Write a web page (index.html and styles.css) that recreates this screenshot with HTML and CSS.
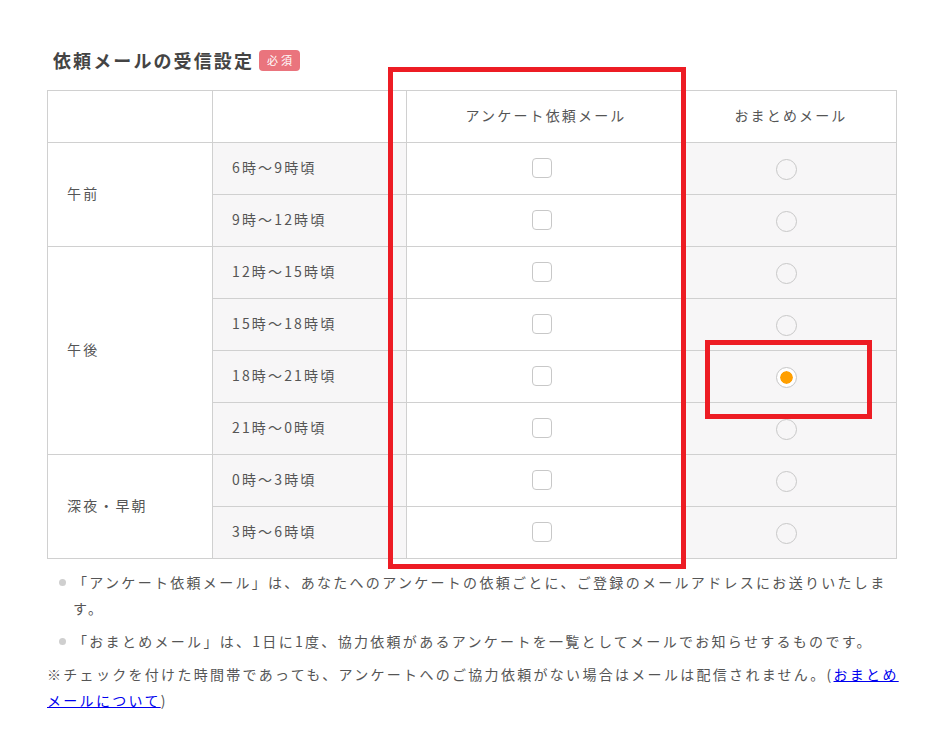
FILE: index.html
```html
<!DOCTYPE html>
<html lang="ja">
<head>
<meta charset="utf-8">
<title>依頼メールの受信設定</title>
<link rel="stylesheet" href="styles.css">
</head>
<body>
<div class="page">
  <h2 class="title">依頼メールの受信設定<span class="badge">必須</span></h2>

  <table class="settings">
    <colgroup>
      <col class="c-period">
      <col class="c-time">
      <col class="c-survey">
      <col class="c-summary">
    </colgroup>
    <thead>
      <tr>
        <th></th>
        <th></th>
        <th>アンケート依頼メール</th>
        <th>おまとめメール</th>
      </tr>
    </thead>
    <tbody>
      <tr>
        <td class="period" rowspan="2">午前</td>
        <td class="time">6時〜9時頃</td>
        <td class="opt"><input type="checkbox" class="check"></td>
        <td class="opt alt"><input type="radio" name="summary" class="radio"></td>
      </tr>
      <tr>
        <td class="time">9時〜12時頃</td>
        <td class="opt"><input type="checkbox" class="check"></td>
        <td class="opt alt"><input type="radio" name="summary" class="radio"></td>
      </tr>
      <tr>
        <td class="period" rowspan="4">午後</td>
        <td class="time">12時〜15時頃</td>
        <td class="opt"><input type="checkbox" class="check"></td>
        <td class="opt alt"><input type="radio" name="summary" class="radio"></td>
      </tr>
      <tr>
        <td class="time">15時〜18時頃</td>
        <td class="opt"><input type="checkbox" class="check"></td>
        <td class="opt alt"><input type="radio" name="summary" class="radio"></td>
      </tr>
      <tr>
        <td class="time">18時〜21時頃</td>
        <td class="opt"><input type="checkbox" class="check"></td>
        <td class="opt alt"><input type="radio" name="summary" class="radio" checked></td>
      </tr>
      <tr>
        <td class="time">21時〜0時頃</td>
        <td class="opt"><input type="checkbox" class="check"></td>
        <td class="opt alt"><input type="radio" name="summary" class="radio"></td>
      </tr>
      <tr>
        <td class="period" rowspan="2">深夜・早朝</td>
        <td class="time">0時〜3時頃</td>
        <td class="opt"><input type="checkbox" class="check"></td>
        <td class="opt alt"><input type="radio" name="summary" class="radio"></td>
      </tr>
      <tr>
        <td class="time">3時〜6時頃</td>
        <td class="opt"><input type="checkbox" class="check"></td>
        <td class="opt alt"><input type="radio" name="summary" class="radio"></td>
      </tr>
    </tbody>
  </table>

  <ul class="notes">
    <li>「アンケート依頼メール」は、あなたへのアンケートの依頼ごとに、ご登録のメールアドレスにお送りいたします。</li>
    <li>「おまとめメール」は、1日に1度、協力依頼があるアンケートを一覧としてメールでお知らせするものです。</li>
  </ul>
  <p class="remark">※チェックを付けた時間帯であっても、アンケートへのご協力依頼がない場合はメールは配信されません。(<a href="#" class="link">おまとめメールについて</a>)</p>

  <div class="mark mark-column"></div>
  <div class="mark mark-cell"></div>
</div>
</body>
</html>
```

FILE: styles.css
```css
html, body {
  margin: 0;
  padding: 0;
  background: #fff;
}

body {
  font-family: "Noto Sans CJK JP", "Noto Sans", sans-serif;
  color: #555;
  font-size: 14px;
  letter-spacing: 2.15px;
}

.page {
  position: relative;
  width: 849px;
  padding: 48px 0 0 47px;
}

.title {
  display: flex;
  align-items: center;
  margin: 0 0 18px 6px;
  font-size: 18px;
  line-height: 24px;
  font-weight: bold;
  color: #444;
  letter-spacing: 2.1px;
}

.badge {
  display: inline-flex;
  align-items: center;
  justify-content: center;
  width: 41px;
  height: 21px;
  margin-left: 5px;
  background: #ea747d;
  color: #fff;
  border-radius: 4px;
  font-size: 11px;
  font-weight: normal;
  letter-spacing: 3px;
  text-indent: 3px;
  line-height: 1;
}

.settings {
  width: 849px;
  table-layout: fixed;
  border-collapse: collapse;
}

.c-period { width: 165px; }
.c-time { width: 194px; }
.c-survey { width: 279px; }
.c-summary { width: 211px; }

.settings tr {
  height: 52px;
}

.settings th,
.settings td {
  border: 1px solid #d0d0d0;
  padding: 0 0 4px;
  height: 51px;
  box-sizing: border-box;
}

.settings th {
  font-weight: normal;
  text-align: center;
  background: #fff;
}

.period {
  padding-left: 19px !important;
  background: #fff;
}

.time {
  padding-left: 19px !important;
  background: #f7f6f7;
}

.settings td.opt {
  padding: 0;
  text-align: center;
  background: #fff;
}

.settings td.opt.alt {
  background: #f7f6f7;
}

.check,
.radio {
  -webkit-appearance: none;
  appearance: none;
  display: inline-block;
  box-sizing: border-box;
  width: 20px;
  height: 20px;
  margin: 0 9px 0 0;
  border: 1px solid #c8c8c8;
  background: transparent;
  vertical-align: middle;
  position: relative;
  top: -2px;
}

.check {
  border-radius: 4px;
}

.radio {
  width: 21px;
  height: 21px;
  margin-right: 10px;
  border-radius: 50%;
  top: 0;
}

.radio:checked {
  padding: 3px;
  background: #ff9f00;
  background-clip: content-box;
  box-shadow: inset 0 0 0 3px #fff;
}

.notes {
  list-style: none;
  margin: 10px 0 0;
  padding: 0;
  letter-spacing: 2.3px;
}

.notes li {
  position: relative;
  padding-left: 26px;
  line-height: 26px;
  margin-bottom: 7px;
}

.notes li::before {
  content: "";
  position: absolute;
  left: 12px;
  top: 10px;
  width: 7px;
  height: 7px;
  border-radius: 50%;
  background: #cfcfcf;
}

.remark {
  margin: 0 -10px 0 0;
  line-height: 26px;
  letter-spacing: 2.3px;
}

.link {
  color: #0000ee;
  text-decoration: underline;
}

.mark {
  position: absolute;
  border: 5px solid #ed1c24;
  box-sizing: border-box;
  pointer-events: none;
}

.mark-column {
  left: 388px;
  top: 67px;
  width: 298px;
  height: 502px;
}

.mark-cell {
  left: 705px;
  top: 340px;
  width: 167px;
  height: 79px;
}
```
